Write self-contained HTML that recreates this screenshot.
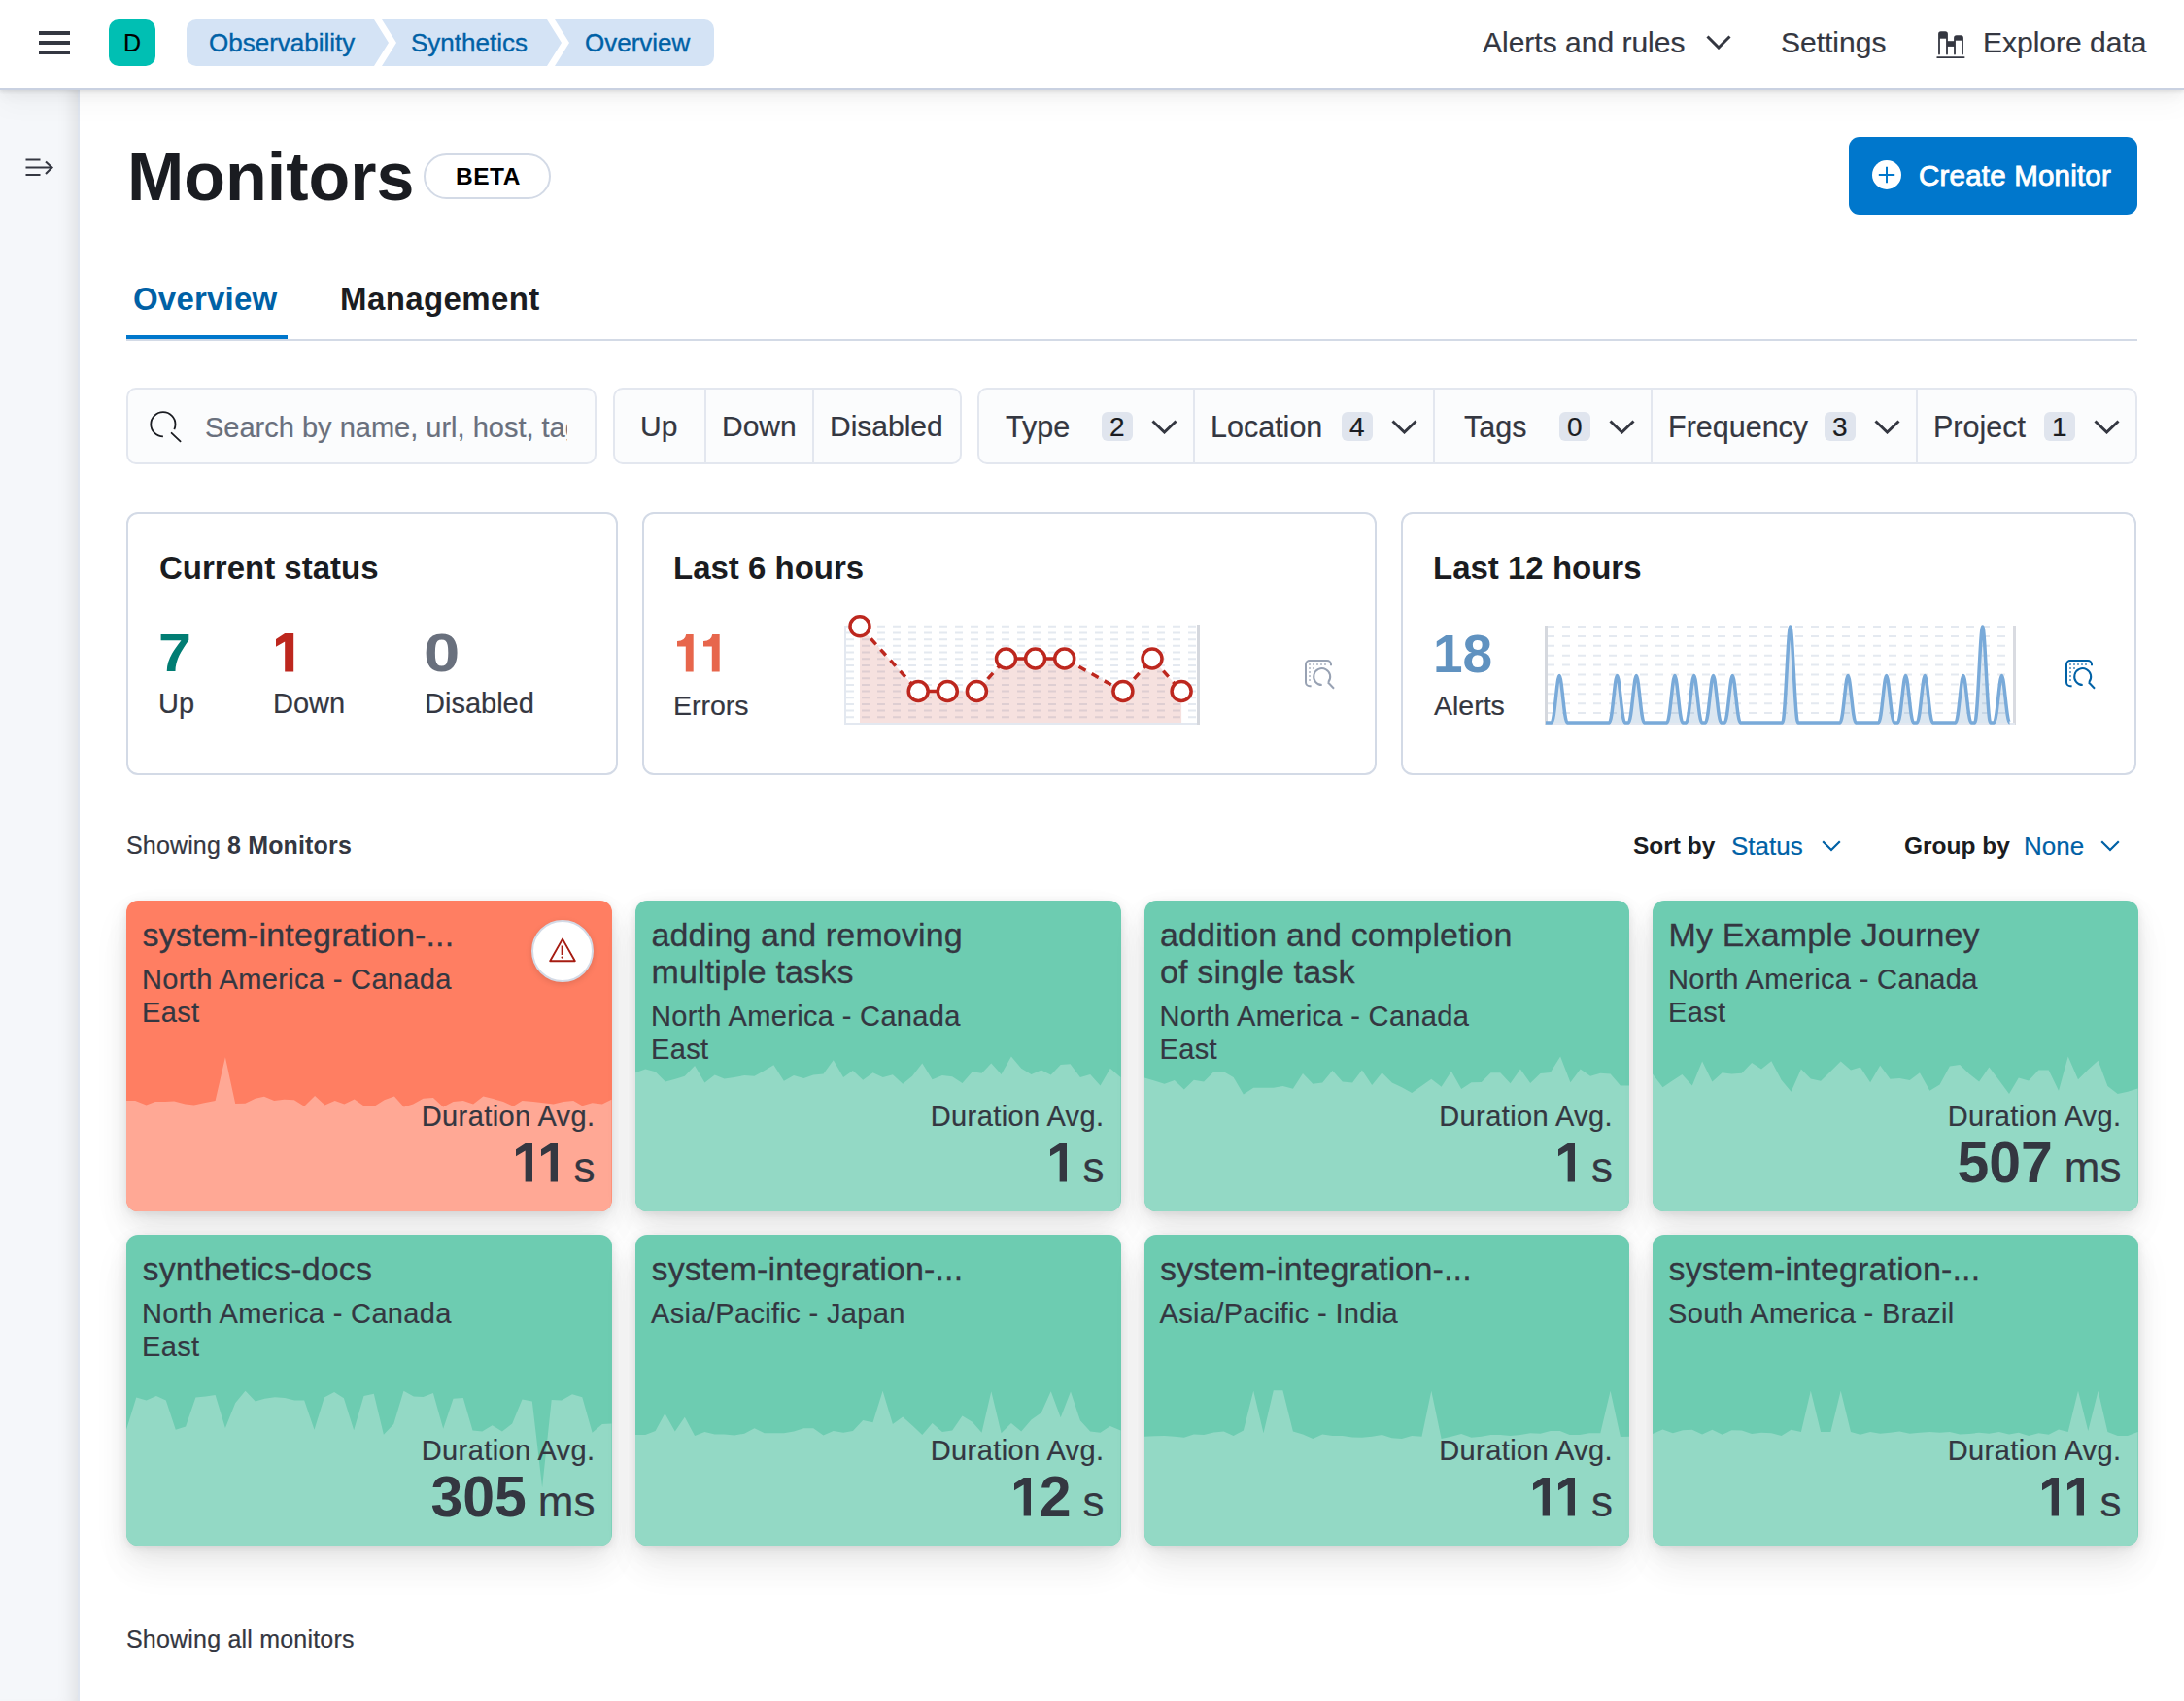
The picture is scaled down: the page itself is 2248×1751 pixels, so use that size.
<!DOCTYPE html>
<html><head><meta charset="utf-8">
<style>
*{box-sizing:border-box;margin:0;padding:0}
html,body{width:2248px;height:1751px;overflow:hidden;background:#fff;font-family:"Liberation Sans",sans-serif;color:#343741}
.abs{position:absolute}
.hdr{position:absolute;left:0;top:0;width:2248px;height:93px;background:#fff;border-bottom:2px solid #c9d1e1;z-index:5;box-shadow:0 2px 3px rgba(0,0,0,.07),0 6px 12px rgba(0,0,0,.045),0 16px 26px rgba(0,0,0,.03)}
.side{position:absolute;left:0;top:93px;width:82px;height:1660px;background:#f5f7fa;border-right:2px solid #dfe5ef;box-shadow:inset -16px 0 18px -12px rgba(0,0,0,.10)}
.t{position:absolute;white-space:nowrap;line-height:1}
.med{-webkit-text-stroke:0.35px currentColor}
body{-webkit-text-stroke:0.2px currentColor}
b,[style*="font-weight:bold"]{-webkit-text-stroke:0}
.bc{position:absolute;top:20px;height:48px;background:#d4e3f5}
.badge{position:absolute;top:423.7px;height:30.4px;width:31.6px;border-radius:6px;background:#e0e5ee;color:#1a1c21;font-size:28px;text-align:center;line-height:31px}
.panel{position:absolute;top:527px;height:271px;border:2px solid #d3dae6;border-radius:12px;background:#fff}
.card{position:absolute;width:499.5px;height:320px;border-radius:12px;overflow:hidden;background:#6dccb1;box-shadow:0 2px 8px rgba(0,0,0,.08),0 7px 22px rgba(0,0,0,.06),0 16px 40px rgba(0,0,0,.05),0 28px 40px rgba(0,0,0,.03)}
.card.red{background:#ff7e62}
.card>svg{position:absolute;left:0;top:0}
.ct{-webkit-text-stroke:0.3px currentColor;position:absolute;left:16.5px;letter-spacing:0.15px;top:16px;font-size:34px;line-height:38px;color:#343741;white-space:nowrap}
.cl{position:absolute;left:16px;font-size:29px;letter-spacing:0.35px;line-height:34px;color:#343741;white-space:nowrap}
.cd{position:absolute;right:17px;top:207.5px;font-size:29px;letter-spacing:0.4px;line-height:1;color:#343741;white-space:nowrap;text-align:right}
.cv{position:absolute;right:17px;top:241px;line-height:1;color:#343741;white-space:nowrap;text-align:right}
.cv b{font-size:59px}
.cv span{font-size:44px;margin-left:12px}
.warn{position:absolute;left:416.6px;top:20.3px;width:64px;height:64px;border-radius:50%;background:#fff;border:2px solid #d3dae6;box-shadow:0 2px 6px rgba(0,0,0,.12);display:flex;align-items:center;justify-content:center}
.warn svg{position:static}
</style></head>
<body>
<!-- HEADER -->
<div class="hdr">
  <div class="abs" style="left:40px;top:32px;width:32px;height:4px;background:#343741"></div>
  <div class="abs" style="left:40px;top:42px;width:32px;height:4px;background:#343741"></div>
  <div class="abs" style="left:40px;top:52px;width:32px;height:4px;background:#343741"></div>
  <div class="abs" style="left:112px;top:20px;width:48px;height:48px;border-radius:10px;background:#00bfb3;color:#000;font-size:25px;text-align:center;line-height:48px">D</div>
  <svg class="abs" style="left:192px;top:20px" width="545" height="48" viewBox="0 0 545 48">
    <path d="M10 0 H193 L208 24 L193 48 H10 A10 10 0 0 1 0 38 V10 A10 10 0 0 1 10 0Z" fill="#d4e3f5"/>
    <path d="M201 0 H371 L386 24 L371 48 H201 L216 24Z" fill="#d4e3f5"/>
    <path d="M379 0 H533 A10 10 0 0 1 543 10 V38 A10 10 0 0 1 533 48 H379 L394 24Z" fill="#d4e3f5"/>
  </svg>
  <div class="t med" style="left:215px;top:25px;font-size:26px;color:#0061a6;line-height:38px">Observability</div>
  <div class="t med" style="left:423px;top:25px;font-size:26px;color:#0061a6;line-height:38px">Synthetics</div>
  <div class="t med" style="left:602px;top:25px;font-size:26px;color:#0061a6;line-height:38px">Overview</div>
  <div class="t" style="left:1526px;top:26px;font-size:30px;line-height:36px">Alerts and rules</div>
  <svg class="abs" style="left:1756px;top:36px" width="26" height="15" viewBox="0 0 26 15"><path d="M1.5 1.5 L13 13 L24.5 1.5" fill="none" stroke="#343741" stroke-width="3"/></svg>
  <div class="t" style="left:1833px;top:26px;font-size:30px;line-height:36px">Settings</div>
  <svg class="abs" style="left:1985px;top:25px" width="50" height="40" viewBox="0 0 50 40">
    <path d="M11 30.6 V10 Q11 8.2 12.8 8.2 H17.2 Q19 8.2 19 10 V30.6 M27 30.6 V14 Q27 12.2 28.8 12.2 H33.2 Q35 12.2 35 14 V30.6" fill="none" stroke="#343741" stroke-width="1.8" stroke-linecap="round"/>
    <rect x="11" y="8.5" width="8" height="6.2" fill="#343741"/><rect x="19" y="17.2" width="8" height="5.7" fill="#343741"/><rect x="27" y="12.5" width="8" height="4.2" fill="#343741"/>
    <path d="M9.2 34.1 H36.6" stroke="#343741" stroke-width="1.9" stroke-linecap="round"/>
  </svg>
  <div class="t" style="left:2041px;top:26px;font-size:30px;line-height:36px">Explore data</div>
</div>
<!-- SIDEBAR -->
<div class="side">
  <svg class="abs" style="left:25px;top:68.5px" width="32" height="20" viewBox="0 0 32 20">
    <path d="M1.5 2.5 H16.5 M1.5 10.5 H28 M1.5 18 H16.5 M22 4.5 L28.5 10.5 L22 17" fill="none" stroke="#343741" stroke-width="2.1"/>
  </svg>
</div>

<!-- TITLE -->
<div class="t" style="left:131px;top:141.5px;font-size:70px;font-weight:bold;color:#1a1c21;line-height:80px">Monitors</div>
<div class="abs" style="left:436px;top:158px;width:131px;height:47px;border:2px solid #d3dae6;border-radius:24px;background:#fff"></div>
<div class="t" style="left:469px;top:170px;font-size:24.5px;font-weight:bold;color:#000;letter-spacing:0.5px;line-height:24px">BETA</div>
<div class="abs" style="left:1903px;top:141px;width:297px;height:80px;border-radius:11px;background:#0077cc"></div>
<svg class="abs" style="left:1927px;top:165px" width="30" height="30" viewBox="0 0 30 30"><circle cx="15" cy="15" r="15" fill="#fff"/><path d="M15 6.8 V23.2 M6.8 15 H23.2" stroke="#0077cc" stroke-width="2"/></svg>
<div class="t" style="left:1975px;top:163px;font-size:29.5px;color:#fff;line-height:36px;-webkit-text-stroke:0.9px #fff;letter-spacing:0.2px">Create Monitor</div>

<!-- TABS -->
<div class="t" style="left:137px;top:290px;font-size:33px;font-weight:bold;color:#0061a6;line-height:36px;letter-spacing:0.2px">Overview</div>
<div class="t" style="left:350px;top:290px;font-size:33px;font-weight:bold;color:#1a1c21;line-height:36px;letter-spacing:0.4px">Management</div>
<div class="abs" style="left:130px;top:349px;width:2070px;height:2px;background:#d3dae6"></div>
<div class="abs" style="left:130px;top:345px;width:166px;height:4px;background:#0077cc"></div>

<!-- FILTERS -->
<div class="abs" style="left:130px;top:399px;width:484px;height:79px;border:2px solid #e3e7ef;border-radius:10px;background:#fbfcfd;overflow:hidden">
  <svg class="abs" style="left:18px;top:18px" width="42" height="42" viewBox="0 0 42 42"><circle cx="17.9" cy="17.7" r="12.6" fill="none" stroke="#1a1c21" stroke-width="1.8" stroke-dasharray="64.5 15" transform="rotate(90 17.9 17.7)"/><path d="M26.6 26.8 L35.6 35.4" stroke="#1a1c21" stroke-width="1.8" stroke-linecap="round"/></svg>
</div>
<div class="abs" style="left:211px;top:422px;width:373px;overflow:hidden;white-space:nowrap;font-size:29px;line-height:36px;color:#69707d">Search by name, url, host, tags, project id</div>

<div class="abs" style="left:631px;top:399px;width:359px;height:79px;border:2px solid #e3e7ef;border-radius:10px;background:#fbfcfd"></div>
<div class="abs" style="left:725px;top:401px;width:2px;height:75px;background:#e3e7ef"></div>
<div class="abs" style="left:836px;top:401px;width:2px;height:75px;background:#e3e7ef"></div>
<div class="t" style="left:659px;top:421px;font-size:30px;line-height:36px">Up</div>
<div class="t" style="left:743px;top:421px;font-size:30px;line-height:36px">Down</div>
<div class="t" style="left:854px;top:421px;font-size:30px;line-height:36px">Disabled</div>

<div class="abs" style="left:1006px;top:399px;width:1194px;height:79px;border:2px solid #e3e7ef;border-radius:10px;background:#fbfcfd"></div>
<div class="abs" style="left:1228px;top:401px;width:2px;height:75px;background:#e3e7ef"></div>
<div class="abs" style="left:1475px;top:401px;width:2px;height:75px;background:#e3e7ef"></div>
<div class="abs" style="left:1699px;top:401px;width:2px;height:75px;background:#e3e7ef"></div>
<div class="abs" style="left:1972px;top:401px;width:2px;height:75px;background:#e3e7ef"></div>
<div class="t" style="left:1035px;top:421px;font-size:30.5px;line-height:36px">Type</div>
<div class="badge" style="left:1134px">2</div>
<div class="t" style="left:1246px;top:421px;font-size:30.5px;line-height:36px">Location</div>
<div class="badge" style="left:1381px">4</div>
<div class="t" style="left:1507px;top:421px;font-size:30.5px;line-height:36px">Tags</div>
<div class="badge" style="left:1605px">0</div>
<div class="t" style="left:1717px;top:421px;font-size:30.5px;line-height:36px">Frequency</div>
<div class="badge" style="left:1878px">3</div>
<div class="t" style="left:1990px;top:421px;font-size:30.5px;line-height:36px">Project</div>
<div class="badge" style="left:2104px">1</div>
<svg class="abs" style="left:1185px;top:432px" width="27" height="15" viewBox="0 0 27 15"><path d="M1.5 1.5 L13.5 13 L25.5 1.5" fill="none" stroke="#343741" stroke-width="3"/></svg>
<svg class="abs" style="left:1432px;top:432px" width="27" height="15" viewBox="0 0 27 15"><path d="M1.5 1.5 L13.5 13 L25.5 1.5" fill="none" stroke="#343741" stroke-width="3"/></svg>
<svg class="abs" style="left:1656px;top:432px" width="27" height="15" viewBox="0 0 27 15"><path d="M1.5 1.5 L13.5 13 L25.5 1.5" fill="none" stroke="#343741" stroke-width="3"/></svg>
<svg class="abs" style="left:1929px;top:432px" width="27" height="15" viewBox="0 0 27 15"><path d="M1.5 1.5 L13.5 13 L25.5 1.5" fill="none" stroke="#343741" stroke-width="3"/></svg>
<svg class="abs" style="left:2155px;top:432px" width="27" height="15" viewBox="0 0 27 15"><path d="M1.5 1.5 L13.5 13 L25.5 1.5" fill="none" stroke="#343741" stroke-width="3"/></svg>

<!-- PANELS -->
<div class="panel" style="left:130px;width:506px"></div>
<div class="panel" style="left:661px;width:756px"></div>
<div class="panel" style="left:1442px;width:757px"></div>
<div class="t" style="left:164px;top:568px;font-size:33px;font-weight:bold;color:#1a1c21">Current status</div>
<div class="t" style="left:163px;top:645px;font-size:55px;font-weight:bold;color:#017d73;transform:scaleX(1.11);transform-origin:0 0">7</div>
<div class="t" style="left:284.1px;top:645px;font-size:55px;font-weight:bold;color:#bd271e"><svg width="18.2" height="39.5" viewBox="0 0 18.2 39.5" style="vertical-align:baseline;overflow:visible"><path d="M9.2 0 H18.2 V39.5 H9.2 V8.6 L0 13.7 V6.1 Z" fill="#bd271e"/></svg></div>
<div class="t" style="left:436px;top:645px;font-size:55px;font-weight:bold;color:#69707d;transform:scaleX(1.22);transform-origin:0 0">0</div>
<div class="t" style="left:163px;top:710px;font-size:29px">Up</div>
<div class="t" style="left:281px;top:710px;font-size:29px">Down</div>
<div class="t" style="left:437px;top:710px;font-size:29px">Disabled</div>
<div class="t" style="left:693px;top:568px;font-size:33px;font-weight:bold;color:#1a1c21">Last 6 hours</div>
<div class="t" style="left:697.2px;top:646px;font-size:55px;font-weight:bold;color:#e7664c"><svg width="16.7" height="38.6" viewBox="0 0 16.7 38.6" style="margin-right:10.3px;vertical-align:baseline;overflow:visible"><path d="M0 7.1 Q8.3 6.8 9.2 0 H16.7 V38.6 H8.8 V12.5 H0 Z" fill="#e7664c"/></svg><svg width="16.7" height="38.6" viewBox="0 0 16.7 38.6" style="vertical-align:baseline;overflow:visible"><path d="M0 7.1 Q8.3 6.8 9.2 0 H16.7 V38.6 H8.8 V12.5 H0 Z" fill="#e7664c"/></svg></div>
<div class="t" style="left:693px;top:712px;font-size:28.5px">Errors</div>
<div class="t" style="left:1475px;top:568px;font-size:33px;font-weight:bold;color:#1a1c21">Last 12 hours</div>
<div class="t" style="left:1475px;top:646px;font-size:55px;font-weight:bold;color:#6092c0">18</div>
<div class="t" style="left:1476px;top:712px;font-size:28.5px">Alerts</div>
<svg class="abs" style="left:850px;top:620px" width="400" height="140" viewBox="850 620 400 140"><line x1="871" y1="644.8" x2="1232" y2="644.8" stroke="#e4e9f0" stroke-width="2" stroke-dasharray="8 8"/><line x1="871" y1="651.5" x2="1232" y2="651.5" stroke="#e4e9f0" stroke-width="2" stroke-dasharray="8 8"/><line x1="871" y1="658.2" x2="1232" y2="658.2" stroke="#e4e9f0" stroke-width="2" stroke-dasharray="8 8"/><line x1="871" y1="664.8" x2="1232" y2="664.8" stroke="#e4e9f0" stroke-width="2" stroke-dasharray="8 8"/><line x1="871" y1="671.5" x2="1232" y2="671.5" stroke="#e4e9f0" stroke-width="2" stroke-dasharray="8 8"/><line x1="871" y1="678.2" x2="1232" y2="678.2" stroke="#e4e9f0" stroke-width="2" stroke-dasharray="8 8"/><line x1="871" y1="684.9" x2="1232" y2="684.9" stroke="#e4e9f0" stroke-width="2" stroke-dasharray="8 8"/><line x1="871" y1="691.6" x2="1232" y2="691.6" stroke="#e4e9f0" stroke-width="2" stroke-dasharray="8 8"/><line x1="871" y1="698.2" x2="1232" y2="698.2" stroke="#e4e9f0" stroke-width="2" stroke-dasharray="8 8"/><line x1="871" y1="704.9" x2="1232" y2="704.9" stroke="#e4e9f0" stroke-width="2" stroke-dasharray="8 8"/><line x1="871" y1="711.6" x2="1232" y2="711.6" stroke="#e4e9f0" stroke-width="2" stroke-dasharray="8 8"/><line x1="871" y1="718.3" x2="1232" y2="718.3" stroke="#e4e9f0" stroke-width="2" stroke-dasharray="8 8"/><line x1="871" y1="725.0" x2="1232" y2="725.0" stroke="#e4e9f0" stroke-width="2" stroke-dasharray="8 8"/><line x1="871" y1="731.6" x2="1232" y2="731.6" stroke="#e4e9f0" stroke-width="2" stroke-dasharray="8 8"/><line x1="871" y1="738.3" x2="1232" y2="738.3" stroke="#e4e9f0" stroke-width="2" stroke-dasharray="8 8"/><path d="M885 745 L885.0 644.8 L945.2 711.5 L975.3 711.5 L1005.4 711.5 L1035.5 678.0 L1065.6 678.0 L1095.7 678.0 L1155.9 711.5 L1186.0 678.0 L1216.1 711.5 L1216.1 745Z" fill="rgba(189,39,30,0.14)"/><line x1="870" y1="644" x2="870" y2="746" stroke="#e3e8f0" stroke-width="2"/><line x1="870" y1="745" x2="1234" y2="745" stroke="#e3e8f0" stroke-width="2"/><line x1="1233.5" y1="643" x2="1233.5" y2="746" stroke="#d5d8de" stroke-width="3"/><line x1="885.0" y1="644.8" x2="945.2" y2="711.5" stroke="#bd271e" stroke-width="3.5" stroke-dasharray="8 7" stroke-dashoffset="-2"/><line x1="945.2" y1="711.5" x2="975.3" y2="711.5" stroke="#bd271e" stroke-width="3.5"/><line x1="1005.4" y1="711.5" x2="1035.5" y2="678.0" stroke="#bd271e" stroke-width="3.5" stroke-dasharray="8 7" stroke-dashoffset="-2"/><line x1="1035.5" y1="678.0" x2="1065.6" y2="678.0" stroke="#bd271e" stroke-width="3.5"/><line x1="1065.6" y1="678.0" x2="1095.7" y2="678.0" stroke="#bd271e" stroke-width="3.5"/><line x1="1095.7" y1="678.0" x2="1155.9" y2="711.5" stroke="#bd271e" stroke-width="3.5" stroke-dasharray="8 7" stroke-dashoffset="-2"/><line x1="1155.9" y1="711.5" x2="1186.0" y2="678.0" stroke="#bd271e" stroke-width="3.5" stroke-dasharray="8 7" stroke-dashoffset="-2"/><line x1="1186.0" y1="678.0" x2="1216.1" y2="711.5" stroke="#bd271e" stroke-width="3.5" stroke-dasharray="8 7" stroke-dashoffset="-2"/><circle cx="885.0" cy="644.8" r="10" fill="#fff" stroke="#bd271e" stroke-width="3.5"/><circle cx="945.2" cy="711.5" r="10" fill="#fff" stroke="#bd271e" stroke-width="3.5"/><circle cx="975.3" cy="711.5" r="10" fill="#fff" stroke="#bd271e" stroke-width="3.5"/><circle cx="1005.4" cy="711.5" r="10" fill="#fff" stroke="#bd271e" stroke-width="3.5"/><circle cx="1035.5" cy="678.0" r="10" fill="#fff" stroke="#bd271e" stroke-width="3.5"/><circle cx="1065.6" cy="678.0" r="10" fill="#fff" stroke="#bd271e" stroke-width="3.5"/><circle cx="1095.7" cy="678.0" r="10" fill="#fff" stroke="#bd271e" stroke-width="3.5"/><circle cx="1155.9" cy="711.5" r="10" fill="#fff" stroke="#bd271e" stroke-width="3.5"/><circle cx="1186.0" cy="678.0" r="10" fill="#fff" stroke="#bd271e" stroke-width="3.5"/><circle cx="1216.1" cy="711.5" r="10" fill="#fff" stroke="#bd271e" stroke-width="3.5"/></svg>
<svg class="abs" style="left:1580px;top:620px" width="510" height="140" viewBox="1580 620 510 140"><line x1="1592" y1="645.0" x2="2073" y2="645.0" stroke="#e4e9f0" stroke-width="2" stroke-dasharray="8 8"/><line x1="1592" y1="654.9" x2="2073" y2="654.9" stroke="#e4e9f0" stroke-width="2" stroke-dasharray="8 8"/><line x1="1592" y1="664.8" x2="2073" y2="664.8" stroke="#e4e9f0" stroke-width="2" stroke-dasharray="8 8"/><line x1="1592" y1="674.7" x2="2073" y2="674.7" stroke="#e4e9f0" stroke-width="2" stroke-dasharray="8 8"/><line x1="1592" y1="684.6" x2="2073" y2="684.6" stroke="#e4e9f0" stroke-width="2" stroke-dasharray="8 8"/><line x1="1592" y1="694.5" x2="2073" y2="694.5" stroke="#e4e9f0" stroke-width="2" stroke-dasharray="8 8"/><line x1="1592" y1="704.4" x2="2073" y2="704.4" stroke="#e4e9f0" stroke-width="2" stroke-dasharray="8 8"/><line x1="1592" y1="714.3" x2="2073" y2="714.3" stroke="#e4e9f0" stroke-width="2" stroke-dasharray="8 8"/><line x1="1592" y1="724.2" x2="2073" y2="724.2" stroke="#e4e9f0" stroke-width="2" stroke-dasharray="8 8"/><line x1="1592" y1="734.1" x2="2073" y2="734.1" stroke="#e4e9f0" stroke-width="2" stroke-dasharray="8 8"/><path d="M1591 744 L1597.1 744 C1600.1 744 1602.6 695.5 1605.1 695.5 C1607.6 695.5 1610.1 744 1613.1 744 L1656.5 744 C1659.5 744 1662.0 695.5 1664.5 695.5 C1667.0 695.5 1669.5 744 1672.5 744 L1676.3 744 C1679.3 744 1681.8 695.5 1684.3 695.5 C1686.8 695.5 1689.3 744 1692.3 744 L1715.9 744 C1718.9 744 1721.4 695.5 1723.9 695.5 C1726.4 695.5 1728.9 744 1731.9 744 L1735.7 744 C1738.7 744 1741.2 695.5 1743.7 695.5 C1746.2 695.5 1748.7 744 1751.7 744 L1755.5 744 C1758.5 744 1761.0 695.5 1763.5 695.5 C1766.0 695.5 1768.5 744 1771.5 744 L1775.3 744 C1778.3 744 1780.8 695.5 1783.3 695.5 C1785.8 695.5 1788.3 744 1791.3 744 L1834.7 744 C1837.7 744 1840.2 645 1842.7 645 C1845.2 645 1847.7 744 1850.7 744 L1894.1 744 C1897.1 744 1899.6 695.5 1902.1 695.5 C1904.6 695.5 1907.1 744 1910.1 744 L1933.7 744 C1936.7 744 1939.2 695.5 1941.7 695.5 C1944.2 695.5 1946.7 744 1949.7 744 L1953.5 744 C1956.5 744 1959.0 695.5 1961.5 695.5 C1964.0 695.5 1966.5 744 1969.5 744 L1973.3 744 C1976.3 744 1978.8 695.5 1981.3 695.5 C1983.8 695.5 1986.3 744 1989.3 744 L2012.9 744 C2015.9 744 2018.4 695.5 2020.9 695.5 C2023.4 695.5 2025.9 744 2028.9 744 L2032.7 744 C2035.7 744 2038.2 645 2040.7 645 C2043.2 645 2045.7 744 2048.7 744 L2052.5 744 C2055.5 744 2058.0 695.5 2060.5 695.5 C2063.0 695.5 2065.5 744 2068.5 744 Z" fill="rgba(96,146,192,0.22)"/><line x1="1591.5" y1="644" x2="1591.5" y2="746" stroke="#d5d8de" stroke-width="3"/><line x1="2073.5" y1="644" x2="2073.5" y2="746" stroke="#d9dbe1" stroke-width="3"/><line x1="1591" y1="745" x2="2074" y2="745" stroke="#e3e8f0" stroke-width="2"/><path d="M1591 744 L1597.1 744 C1600.1 744 1602.6 695.5 1605.1 695.5 C1607.6 695.5 1610.1 744 1613.1 744 L1656.5 744 C1659.5 744 1662.0 695.5 1664.5 695.5 C1667.0 695.5 1669.5 744 1672.5 744 L1676.3 744 C1679.3 744 1681.8 695.5 1684.3 695.5 C1686.8 695.5 1689.3 744 1692.3 744 L1715.9 744 C1718.9 744 1721.4 695.5 1723.9 695.5 C1726.4 695.5 1728.9 744 1731.9 744 L1735.7 744 C1738.7 744 1741.2 695.5 1743.7 695.5 C1746.2 695.5 1748.7 744 1751.7 744 L1755.5 744 C1758.5 744 1761.0 695.5 1763.5 695.5 C1766.0 695.5 1768.5 744 1771.5 744 L1775.3 744 C1778.3 744 1780.8 695.5 1783.3 695.5 C1785.8 695.5 1788.3 744 1791.3 744 L1834.7 744 C1837.7 744 1840.2 645 1842.7 645 C1845.2 645 1847.7 744 1850.7 744 L1894.1 744 C1897.1 744 1899.6 695.5 1902.1 695.5 C1904.6 695.5 1907.1 744 1910.1 744 L1933.7 744 C1936.7 744 1939.2 695.5 1941.7 695.5 C1944.2 695.5 1946.7 744 1949.7 744 L1953.5 744 C1956.5 744 1959.0 695.5 1961.5 695.5 C1964.0 695.5 1966.5 744 1969.5 744 L1973.3 744 C1976.3 744 1978.8 695.5 1981.3 695.5 C1983.8 695.5 1986.3 744 1989.3 744 L2012.9 744 C2015.9 744 2018.4 695.5 2020.9 695.5 C2023.4 695.5 2025.9 744 2028.9 744 L2032.7 744 C2035.7 744 2038.2 645 2040.7 645 C2043.2 645 2045.7 744 2048.7 744 L2052.5 744 C2055.5 744 2058.0 695.5 2060.5 695.5 C2063.0 695.5 2065.5 744 2068.5 744" fill="none" stroke="#79aad9" stroke-width="3.5" stroke-linejoin="round"/></svg>
<svg class="abs" style="left:1341px;top:677px" width="34" height="34" viewBox="0 0 34 34"><path d="M8.6 29.2 H7 A4 4 0 0 1 3 25.2 V7 A4 4 0 0 1 7 3 H25 A4 4 0 0 1 29 7 V8.3" fill="none" stroke="#98a2b3" stroke-width="2"/><rect x="6" y="6" width="2" height="2" fill="#98a2b3" opacity="0.6"/><rect x="10" y="6" width="2" height="2" fill="#98a2b3" opacity="0.6"/><rect x="14" y="6" width="2" height="2" fill="#98a2b3" opacity="0.6"/><rect x="18" y="6" width="2" height="2" fill="#98a2b3" opacity="0.6"/><rect x="22" y="6" width="2" height="2" fill="#98a2b3" opacity="0.6"/><rect x="6" y="10" width="2" height="2" fill="#98a2b3" opacity="0.6"/><rect x="10" y="10" width="2" height="2" fill="#98a2b3" opacity="0.6"/><rect x="6" y="14" width="2" height="2" fill="#98a2b3" opacity="0.6"/><rect x="6" y="18" width="2" height="2" fill="#98a2b3" opacity="0.6"/><rect x="6" y="22" width="2" height="2" fill="#98a2b3" opacity="0.6"/><path d="M19.7 28.1 A8.5 8.5 0 1 1 26.2 25.1" fill="none" stroke="#98a2b3" stroke-width="2"/><path d="M25.8 25.2 L32 31.8" stroke="#98a2b3" stroke-width="2"/></svg>
<svg class="abs" style="left:2124px;top:677px" width="34" height="34" viewBox="0 0 34 34"><path d="M8.6 29.2 H7 A4 4 0 0 1 3 25.2 V7 A4 4 0 0 1 7 3 H25 A4 4 0 0 1 29 7 V8.3" fill="none" stroke="#0061a6" stroke-width="2"/><rect x="6" y="6" width="2" height="2" fill="#0061a6" opacity="0.55"/><rect x="10" y="6" width="2" height="2" fill="#0061a6" opacity="0.55"/><rect x="14" y="6" width="2" height="2" fill="#0061a6" opacity="0.55"/><rect x="18" y="6" width="2" height="2" fill="#0061a6" opacity="0.55"/><rect x="22" y="6" width="2" height="2" fill="#0061a6" opacity="0.55"/><rect x="6" y="10" width="2" height="2" fill="#0061a6" opacity="0.55"/><rect x="10" y="10" width="2" height="2" fill="#0061a6" opacity="0.55"/><rect x="6" y="14" width="2" height="2" fill="#0061a6" opacity="0.55"/><rect x="6" y="18" width="2" height="2" fill="#0061a6" opacity="0.55"/><rect x="6" y="22" width="2" height="2" fill="#0061a6" opacity="0.55"/><path d="M19.7 28.1 A8.5 8.5 0 1 1 26.2 25.1" fill="none" stroke="#0061a6" stroke-width="2"/><path d="M25.8 25.2 L32 31.8" stroke="#0061a6" stroke-width="2"/></svg>
<div class="t" style="left:130px;top:858px;font-size:25px;letter-spacing:0.15px">Showing <b>8 Monitors</b></div>
<div class="t" style="left:1681px;top:859px;font-size:24.5px;font-weight:bold;color:#1a1c21">Sort by</div>
<div class="t" style="left:1782px;top:858px;font-size:26px;color:#0061a6">Status</div>
<svg class="abs" style="left:1875px;top:865px" width="20" height="12" viewBox="0 0 20 12"><path d="M1.2 1.2 L10 10 L18.8 1.2" fill="none" stroke="#0061a6" stroke-width="2.2"/></svg>
<div class="t" style="left:1960px;top:859px;font-size:24.5px;font-weight:bold;color:#1a1c21">Group by</div>
<div class="t" style="left:2083px;top:858px;font-size:26px;color:#0061a6">None</div>
<svg class="abs" style="left:2162px;top:865px" width="20" height="12" viewBox="0 0 20 12"><path d="M1.2 1.2 L10 10 L18.8 1.2" fill="none" stroke="#0061a6" stroke-width="2.2"/></svg>

<div class="card red" style="left:130px;top:927px">
<svg width="499.5" height="320" viewBox="0 0 499.5 320"><path d="M0 320 L0.0 206.0 L9.2 206.0 L20.6 210.5 L29.8 207.1 L40.1 207.1 L49.2 206.4 L60.7 209.4 L69.8 210.5 L80.1 208.2 L91.6 206.0 L101.9 161.3 L112.2 208.9 L122.5 208.7 L132.8 203.7 L141.9 201.8 L152.2 206.0 L162.5 204.8 L172.8 205.3 L183.2 211.7 L194.1 200.9 L204.4 210.5 L214.7 206.0 L224.4 209.4 L234.7 204.4 L245.0 211.7 L255.3 211.7 L265.6 205.3 L275.9 201.4 L285.7 212.4 L295.3 209.4 L305.6 203.7 L315.9 203.0 L326.2 212.4 L336.5 207.1 L346.8 206.0 L357.1 209.4 L367.4 201.4 L377.7 204.1 L388.0 207.1 L398.4 211.7 L407.5 206.0 L419.0 207.1 L429.3 208.2 L439.6 209.4 L449.9 207.1 L460.2 206.0 L469.3 211.2 L479.6 208.2 L489.9 209.4 L499.5 204.8 L499.5 320Z" fill="#ffa895"/></svg>
<div class="ct">system-integration-...</div>
<div class="cl" style="top:64px">North America - Canada<br>East</div>
<div class="warn"><svg width="30" height="28" viewBox="0 0 30 28"><path d="M15 1.6 L27.8 24.2 H2.2 Z" fill="none" stroke="#a61c12" stroke-width="1.9" stroke-linejoin="round"/><path d="M14.6 8.5 V17.9" stroke="#a61c12" stroke-width="1.9"/><circle cx="14.6" cy="20.6" r="1.15" fill="#a61c12"/></svg></div>
<div class="cd">Duration Avg.</div>
<div class="cv"><b><svg width="17" height="39.6" viewBox="0 0 17 39.6" style="margin-right:8.9px;vertical-align:baseline;overflow:visible"><path d="M9.65 0 H17 V39.6 H9.65 V7.6 L0 13.3 V6.2 Z" fill="#343741"/></svg><svg width="17" height="39.6" viewBox="0 0 17 39.6" style="vertical-align:baseline;overflow:visible"><path d="M9.65 0 H17 V39.6 H9.65 V7.6 L0 13.3 V6.2 Z" fill="#343741"/></svg></b><span style="margin-left:17px">s</span></div>
</div>
<div class="card" style="left:654px;top:927px">
<svg width="499.5" height="320" viewBox="0 0 499.5 320"><path d="M0 320 L0.0 177.3 L10.3 173.4 L20.6 176.2 L30.9 186.5 L41.2 183.8 L50.8 180.8 L61.1 170.0 L71.4 187.6 L81.7 179.6 L91.6 183.5 L101.9 181.9 L112.2 180.1 L122.5 180.8 L132.8 175.1 L142.4 169.3 L152.9 185.8 L163.0 180.1 L173.3 183.1 L183.2 179.6 L193.5 178.5 L203.8 164.3 L214.1 181.9 L223.9 175.1 L234.2 184.7 L244.5 177.3 L254.8 181.9 L264.9 179.2 L275.2 188.8 L285.0 180.8 L295.3 167.5 L305.6 184.2 L315.9 180.1 L326.2 181.2 L336.5 188.1 L346.8 176.2 L356.5 177.8 L366.3 167.5 L376.6 178.9 L386.9 160.6 L397.2 172.8 L407.5 178.9 L417.8 174.4 L427.7 179.6 L437.7 168.9 L447.6 168.2 L457.9 181.9 L468.2 178.9 L478.5 190.6 L488.8 172.8 L499.5 181.9 L499.5 320Z" fill="#93d9c5"/></svg>
<div class="ct">adding and removing<br>multiple tasks</div>
<div class="cl" style="top:102px">North America - Canada<br>East</div>
<div class="cd">Duration Avg.</div>
<div class="cv"><b><svg width="17" height="39.6" viewBox="0 0 17 39.6" style="vertical-align:baseline;overflow:visible"><path d="M9.65 0 H17 V39.6 H9.65 V7.6 L0 13.3 V6.2 Z" fill="#343741"/></svg></b><span style="margin-left:17px">s</span></div>
</div>
<div class="card" style="left:1177.5px;top:927px">
<svg width="499.5" height="320" viewBox="0 0 499.5 320"><path d="M0 320 L0.0 182.4 L10.3 185.4 L20.6 188.8 L30.9 184.9 L40.8 194.5 L50.8 184.7 L61.1 186.5 L71.4 176.2 L81.7 176.2 L91.6 181.9 L101.9 199.5 L112.2 192.7 L122.5 192.7 L132.8 192.7 L142.4 191.1 L152.9 193.8 L163.0 178.0 L173.3 188.8 L183.2 187.6 L193.5 175.1 L203.8 186.5 L214.1 187.6 L223.9 174.6 L234.2 189.9 L244.5 177.3 L254.8 187.6 L264.9 192.2 L275.2 197.9 L285.0 191.1 L295.3 183.8 L305.6 191.8 L315.9 175.7 L326.2 194.1 L336.5 187.2 L346.8 187.0 L356.5 177.3 L366.3 177.3 L376.6 188.3 L386.9 173.4 L397.2 188.1 L407.5 178.0 L417.8 176.9 L428.1 160.6 L438.4 187.2 L448.7 173.4 L459.0 180.8 L469.3 177.8 L479.6 178.5 L489.9 190.6 L499.5 190.6 L499.5 320Z" fill="#93d9c5"/></svg>
<div class="ct">addition and completion<br>of single task</div>
<div class="cl" style="top:102px">North America - Canada<br>East</div>
<div class="cd">Duration Avg.</div>
<div class="cv"><b><svg width="17" height="39.6" viewBox="0 0 17 39.6" style="vertical-align:baseline;overflow:visible"><path d="M9.65 0 H17 V39.6 H9.65 V7.6 L0 13.3 V6.2 Z" fill="#343741"/></svg></b><span style="margin-left:17px">s</span></div>
</div>
<div class="card" style="left:1701px;top:927px">
<svg width="499.5" height="320" viewBox="0 0 499.5 320"><path d="M0 320 L0.0 178.5 L10.5 192.2 L20.4 185.4 L30.4 178.9 L40.8 190.4 L51.1 165.4 L61.4 186.5 L71.7 177.3 L81.5 178.5 L91.8 177.8 L102.1 167.0 L112.0 173.4 L122.3 165.2 L132.6 184.7 L142.6 196.8 L152.9 173.4 L162.8 183.5 L173.1 185.8 L183.4 175.7 L193.7 165.4 L204.0 174.4 L213.8 171.6 L224.1 187.2 L234.2 169.8 L244.5 183.8 L254.3 183.1 L264.7 184.9 L275.0 177.3 L285.3 195.7 L295.6 189.5 L305.9 170.5 L316.2 168.9 L326.0 178.5 L336.1 186.5 L346.4 171.6 L356.7 184.9 L367.0 199.1 L376.8 182.4 L387.1 185.4 L397.4 174.4 L407.7 174.4 L418.0 195.7 L427.7 160.6 L438.0 184.2 L448.3 173.9 L458.6 164.7 L468.4 191.1 L478.7 199.1 L489.0 196.8 L499.5 193.4 L499.5 320Z" fill="#93d9c5"/></svg>
<div class="ct">My Example Journey</div>
<div class="cl" style="top:64px">North America - Canada<br>East</div>
<div class="cd">Duration Avg.</div>
<div class="cv"><b>507</b><span style="margin-left:12px">ms</span></div>
</div>
<div class="card" style="left:130px;top:1271px">
<svg width="499.5" height="320" viewBox="0 0 499.5 320"><path d="M0 320 L0.0 200.8 L10.3 167.6 L20.6 170.6 L30.9 166.0 L40.8 170.6 L50.8 200.8 L61.1 197.4 L71.4 167.6 L81.7 166.5 L91.6 164.9 L101.9 199.0 L112.2 173.3 L122.5 160.7 L132.8 171.5 L142.4 168.8 L152.9 167.2 L163.0 168.1 L173.3 170.4 L183.2 170.4 L193.5 200.8 L203.8 167.6 L214.1 161.9 L223.9 168.3 L234.2 201.3 L244.5 166.0 L254.8 163.7 L264.9 205.8 L275.2 195.1 L285.5 160.7 L295.8 166.5 L305.6 166.9 L315.9 163.0 L326.2 199.7 L336.5 168.8 L346.8 168.1 L356.5 201.5 L366.3 202.4 L376.6 196.2 L386.9 202.4 L397.2 194.6 L407.5 169.4 L417.8 171.5 L428.1 260.3 L437.7 169.9 L448.0 170.6 L459.0 164.2 L469.3 167.2 L479.6 203.8 L489.9 195.1 L499.5 194.6 L499.5 320Z" fill="#93d9c5"/></svg>
<div class="ct">synthetics-docs</div>
<div class="cl" style="top:64px">North America - Canada<br>East</div>
<div class="cd">Duration Avg.</div>
<div class="cv"><b>305</b><span style="margin-left:12px">ms</span></div>
</div>
<div class="card" style="left:654px;top:1271px">
<svg width="499.5" height="320" viewBox="0 0 499.5 320"><path d="M0 320 L0.0 206.1 L10.3 206.1 L20.6 202.0 L30.4 184.1 L40.8 202.4 L50.8 187.8 L61.1 207.0 L71.4 203.1 L81.7 205.4 L91.6 205.4 L101.9 206.5 L112.2 204.7 L122.5 199.2 L132.8 204.2 L142.4 204.2 L152.9 204.2 L163.0 202.4 L173.3 199.2 L183.2 199.2 L193.5 206.5 L203.8 202.0 L214.1 203.8 L223.9 202.0 L234.2 191.0 L244.5 193.3 L254.6 160.7 L264.9 195.1 L275.2 187.5 L285.5 196.7 L295.3 206.1 L305.6 193.9 L315.9 203.1 L326.2 201.5 L336.5 186.6 L346.8 192.8 L356.5 203.8 L366.3 161.2 L376.6 204.2 L386.9 193.9 L397.2 202.4 L407.5 190.5 L417.8 183.2 L427.7 161.2 L437.7 188.2 L448.0 161.4 L457.9 191.2 L468.2 202.6 L478.5 203.8 L488.8 196.9 L499.5 201.5 L499.5 320Z" fill="#93d9c5"/></svg>
<div class="ct">system-integration-...</div>
<div class="cl" style="top:64px">Asia/Pacific - Japan</div>
<div class="cd">Duration Avg.</div>
<div class="cv"><b><svg width="17" height="39.6" viewBox="0 0 17 39.6" style="margin-right:8.9px;vertical-align:baseline;overflow:visible"><path d="M9.65 0 H17 V39.6 H9.65 V7.6 L0 13.3 V6.2 Z" fill="#343741"/></svg>2</b><span style="margin-left:12px">s</span></div>
</div>
<div class="card" style="left:1177.5px;top:1271px">
<svg width="499.5" height="320" viewBox="0 0 499.5 320"><path d="M0 320 L0.0 207.7 L10.3 207.2 L20.6 207.0 L30.9 207.7 L40.8 208.8 L50.8 205.4 L61.1 206.1 L71.4 203.6 L81.7 202.6 L91.6 207.0 L101.9 201.5 L112.2 160.7 L122.5 204.2 L132.8 160.3 L142.4 160.3 L152.9 202.4 L163.0 205.4 L173.3 210.0 L183.2 205.4 L193.5 207.0 L203.8 207.0 L214.1 208.4 L223.9 208.8 L234.2 207.7 L244.5 206.1 L254.6 209.3 L264.9 210.0 L275.2 207.0 L285.5 207.7 L295.3 160.7 L305.6 210.0 L315.9 207.7 L326.2 204.9 L336.5 208.8 L346.8 207.7 L356.5 206.1 L366.3 206.1 L376.6 207.0 L386.9 206.1 L397.2 204.2 L407.5 204.7 L417.8 202.0 L427.7 202.0 L437.7 206.1 L448.0 206.1 L457.9 204.2 L469.3 204.2 L479.6 160.7 L489.9 208.1 L499.5 207.7 L499.5 320Z" fill="#93d9c5"/></svg>
<div class="ct">system-integration-...</div>
<div class="cl" style="top:64px">Asia/Pacific - India</div>
<div class="cd">Duration Avg.</div>
<div class="cv"><b><svg width="17" height="39.6" viewBox="0 0 17 39.6" style="margin-right:8.9px;vertical-align:baseline;overflow:visible"><path d="M9.65 0 H17 V39.6 H9.65 V7.6 L0 13.3 V6.2 Z" fill="#343741"/></svg><svg width="17" height="39.6" viewBox="0 0 17 39.6" style="vertical-align:baseline;overflow:visible"><path d="M9.65 0 H17 V39.6 H9.65 V7.6 L0 13.3 V6.2 Z" fill="#343741"/></svg></b><span style="margin-left:17px">s</span></div>
</div>
<div class="card" style="left:1701px;top:1271px">
<svg width="499.5" height="320" viewBox="0 0 499.5 320"><path d="M0 320 L0.0 204.9 L10.5 200.4 L20.8 204.2 L31.1 201.3 L40.8 200.8 L51.1 205.4 L61.4 200.8 L71.7 205.8 L81.5 201.3 L91.8 201.5 L102.1 204.9 L112.0 203.8 L122.3 204.2 L132.6 207.0 L142.6 200.8 L152.9 203.1 L162.8 160.7 L173.1 203.1 L183.4 203.1 L193.7 160.7 L204.0 203.1 L213.8 205.8 L224.1 203.1 L234.2 204.7 L244.5 203.8 L254.3 202.6 L264.7 204.7 L275.0 203.8 L285.3 203.1 L295.6 203.8 L305.9 203.1 L316.2 205.4 L326.0 204.9 L336.1 203.8 L346.4 204.7 L356.7 203.1 L367.0 205.4 L376.8 203.8 L387.1 207.0 L397.4 204.2 L407.7 205.8 L418.0 200.4 L427.7 203.1 L438.0 160.7 L448.3 202.0 L458.6 160.7 L468.4 203.1 L478.7 207.0 L489.0 207.0 L499.5 203.1 L499.5 320Z" fill="#93d9c5"/></svg>
<div class="ct">system-integration-...</div>
<div class="cl" style="top:64px">South America - Brazil</div>
<div class="cd">Duration Avg.</div>
<div class="cv"><b><svg width="17" height="39.6" viewBox="0 0 17 39.6" style="margin-right:8.9px;vertical-align:baseline;overflow:visible"><path d="M9.65 0 H17 V39.6 H9.65 V7.6 L0 13.3 V6.2 Z" fill="#343741"/></svg><svg width="17" height="39.6" viewBox="0 0 17 39.6" style="vertical-align:baseline;overflow:visible"><path d="M9.65 0 H17 V39.6 H9.65 V7.6 L0 13.3 V6.2 Z" fill="#343741"/></svg></b><span style="margin-left:17px">s</span></div>
</div>

<div class="t" style="left:130px;top:1672px;font-size:25px;line-height:30px;letter-spacing:0.2px">Showing all monitors</div>
</body></html>
